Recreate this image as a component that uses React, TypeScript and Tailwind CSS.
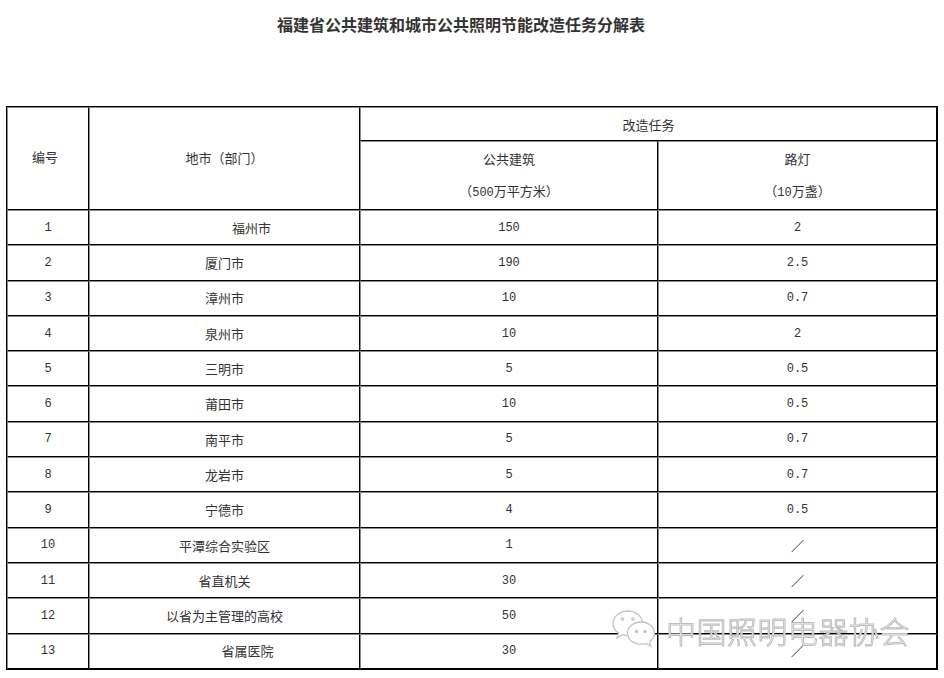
import React from "react";

const rows: [string, string, string, string, number?][] = [
  ["1", "福州市", "150", "2", 54],
  ["2", "厦门市", "190", "2.5"],
  ["3", "漳州市", "10", "0.7"],
  ["4", "泉州市", "10", "2"],
  ["5", "三明市", "5", "0.5"],
  ["6", "莆田市", "10", "0.5"],
  ["7", "南平市", "5", "0.7"],
  ["8", "龙岩市", "5", "0.7"],
  ["9", "宁德市", "4", "0.5"],
  ["10", "平潭综合实验区", "1", "／"],
  ["11", "省直机关", "30", "／"],
  ["12", "以省为主管理的高校", "50", "／"],
  ["13", "省属医院", "30", "／", 46],
];

const cell =
  "border-l border-t border-l-[#8a8a8a] border-t-[#8a8a8a] border-r border-b border-r-black border-b-black p-0 text-center align-middle font-normal";

const num = "font-['Liberation_Mono','Noto_Sans_CJK_SC',monospace] text-[12px]";

const WeChat = () => (
  <svg width="46" height="42" viewBox="0 0 46 42" fill="none" stroke="#c4c4c4" strokeWidth="1.3">
    <path d="M17 2C8.5 2 2 7.6 2 14.4c0 3.9 2.1 7.2 5.4 9.5L6 29l5.6-3.2c1.7.5 3.5.8 5.4.8.6 0 1.2 0 1.8-.1" fill="white" />
    <path d="M31.8 14.2c-.8-6.9-7.2-12.2-14.8-12.2" />
    <path d="M30 13c-7.5 0-13.5 5-13.5 11.1S22.5 35.2 30 35.2c1.6 0 3.2-.2 4.7-.7l5 2.8-1.2-4.6c3-2 4.9-5.1 4.9-8.5C43.4 18 37.5 13 30 13z" fill="white" />
    <circle cx="11.5" cy="10" r="1.2" />
    <circle cx="22" cy="10" r="1.2" />
    <circle cx="25.5" cy="22.5" r="1.1" fill="#c4c4c4" />
    <circle cx="34" cy="22.5" r="1.1" fill="#c4c4c4" />
  </svg>
);

export default function App() {
  return (
    <div className="relative w-[944px] h-[678px] bg-white overflow-hidden antialiased text-[#333] font-['Noto_Sans_CJK_SC',sans-serif]">
      <h1 className="pt-[13px] pr-[22px] text-center text-[16px] leading-[22px] font-bold text-[#333]">
        福建省公共建筑和城市公共照明节能改造任务分解表
      </h1>
      <table className="mt-[71px] ml-[6px] w-[930px] table-fixed border-separate border-spacing-0 border border-black text-[13px]">
        <colgroup>
          <col className="w-[82px]" />
          <col className="w-[271px]" />
          <col className="w-[298px]" />
          <col className="w-[279px]" />
        </colgroup>
        <thead>
          <tr className="h-[34px]">
            <th rowSpan={2} className={cell + " pr-[6px] pb-[3px]"}>
              编号
            </th>
            <th rowSpan={2} className={cell + " pb-[2px]"}>
              地市（部门）
            </th>
            <th colSpan={2} className={cell + " pt-[2px]"}>
              改造任务
            </th>
          </tr>
          <tr className="h-[69px]">
            <th className={cell}>
              <div className="flex flex-col gap-[13px] leading-[19px]">
                <span>公共建筑</span>
                <span>
                  （<span className={num}>500</span>万平方米）
                </span>
              </div>
            </th>
            <th className={cell}>
              <div className="flex flex-col gap-[13px] leading-[19px]">
                <span>路灯</span>
                <span>
                  （<span className={num}>10</span>万盏）
                </span>
              </div>
            </th>
          </tr>
        </thead>
        <tbody>
          {rows.map(([id, name, area, lamp, shift]) => (
            <tr key={id} className="h-[35.3px]">
              <td className={cell + " " + num}>{id}</td>
              <td className={cell}>
                <span style={shift ? { paddingLeft: shift } : undefined}>{name}</span>
              </td>
              <td className={cell + " " + num}>{area}</td>
              <td className={cell + (lamp === "／" ? "" : " " + num)}>
                {lamp === "／" ? (
                  <span className="inline-block will-change-transform text-[13px] text-[#222] font-['Noto_Sans_CJK_SC',sans-serif]">
                    ／
                  </span>
                ) : (
                  lamp
                )}
              </td>
            </tr>
          ))}
        </tbody>
      </table>
      <div className="absolute left-[611px] top-[609px] flex items-center gap-[9px] pointer-events-none">
        <WeChat />
        <span className="text-[30px] leading-[36px] tracking-[0.5px] text-white [-webkit-text-stroke:1px_#bdbdbd] font-['Noto_Sans_CJK_SC',sans-serif] font-light">
          中国照明电器协会
        </span>
      </div>
    </div>
  );
}
